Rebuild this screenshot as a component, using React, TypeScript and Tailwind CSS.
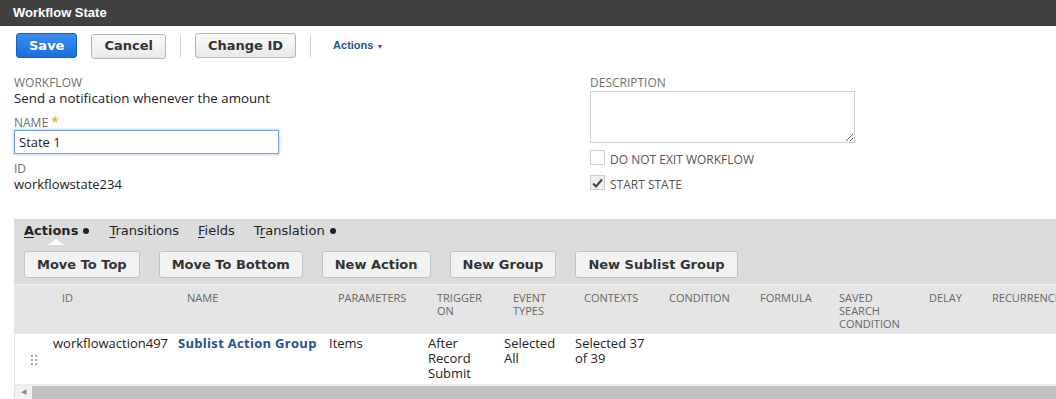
import { useState } from 'react';

const cols = [
  { key: 'id', label: 'ID', w: 'w-[125px]' },
  { key: 'name', label: 'NAME', w: 'w-[151px]' },
  { key: 'params', label: 'PARAMETERS', w: 'w-[99px]' },
  { key: 'trigger', label: 'TRIGGER ON', w: 'w-[76px]' },
  { key: 'event', label: 'EVENT TYPES', w: 'w-[71px]' },
  { key: 'contexts', label: 'CONTEXTS', w: 'w-[85px]' },
  { key: 'condition', label: 'CONDITION', w: 'w-[91px]' },
  { key: 'formula', label: 'FORMULA', w: 'w-[79px]' },
  { key: 'saved', label: 'SAVED SEARCH CONDITION', w: 'w-[90px]' },
  { key: 'delay', label: 'DELAY', w: 'w-[63px]' },
  { key: 'recur', label: 'RECURRENCE', w: 'w-[100px]' },
];

function Btn({ children, primary }: { children: React.ReactNode; primary?: boolean }) {
  if (primary) {
    return (
      <button className="h-[25px] px-[12px] rounded-[3px] border border-[#1660c4] bg-gradient-to-b from-[#3a8cf0] to-[#1b70de] text-white text-[13px] font-bold font-['DejaVu_Sans',sans-serif]">
        {children}
      </button>
    );
  }
  return (
    <button className="h-[25px] px-[12px] rounded-[3px] border border-[#b5b5b5] bg-gradient-to-b from-[#fafafa] to-[#e9e9e9] text-[#333] text-[13px] font-bold font-['DejaVu_Sans',sans-serif]">
      {children}
    </button>
  );
}

function SubBtn({ children }: { children: React.ReactNode }) {
  return (
    <button className="h-[27px] px-[12px] rounded-[3px] border border-[#c2c2c2] bg-[#f2f2f2] text-[#333] text-[13px] font-bold font-['DejaVu_Sans',sans-serif]">
      {children}
    </button>
  );
}

const Dot = () => <span className="inline-block w-[6px] h-[6px] rounded-full bg-[#222] ml-[5px] align-middle -mt-[2px]" />;

export default function App() {
  const [name, setName] = useState('State 1');

  return (
    <div className="w-[1056px] h-[399px] overflow-hidden bg-white font-['Open_Sans',sans-serif] text-[#333]">
      <div className="h-[26px] bg-[#404040] flex items-center px-[13px] text-white text-[13px] font-bold font-['Liberation_Sans',sans-serif]">
        Workflow State
      </div>

      <div className="flex items-center pl-[16px] pt-[7px] h-[32px]">
        <Btn primary>Save</Btn>
        <div className="ml-[14px]"><Btn>Cancel</Btn></div>
        <div className="w-px h-[22px] bg-[#d0d0d0] mx-[14px]" />
        <Btn>Change ID</Btn>
        <div className="w-px h-[22px] bg-[#d0d0d0] mx-[14px]" />
        <span className="ml-[8px] text-[11px] font-bold text-[#24528d] font-['Liberation_Sans',sans-serif]">
          Actions <span className="text-[7px] text-[#555]">▼</span>
        </span>
      </div>

      <div className="flex pt-[17px]">
        <div className="w-[590px] shrink-0 pl-[14px] text-[12px] leading-[15px]">
          <div className="text-[#707070] uppercase">Workflow</div>
          <div className="text-[13.3px] leading-[16px] text-[#222]">Send a notification whenever the amount</div>
          <div className="mt-[9px] h-[15px] text-[#707070] uppercase">
            Name <span className="text-[#e79b1b] text-[14px] leading-none">*</span>
          </div>
          <input
            value={name}
            onChange={(e) => setName(e.target.value)}
            className="block w-[265px] h-[24px] border border-[#6fa3e0] shadow-[0_0_3px_#8cb8ec] px-[4px] text-[13px] text-[#222] outline-none"
          />
          <div className="mt-[7px] text-[#707070] uppercase">ID</div>
          <div className="text-[13px] leading-[16px] text-[#222]">workflowstate234</div>
        </div>
        <div className="text-[12px] leading-[15px]">
          <div className="text-[#707070] uppercase">Description</div>
          <textarea className="block mt-[1px] w-[265px] h-[52px] border border-[#cfcfcf] resize-y" />
          <label className="flex items-center mt-[7px] h-[15px]">
            <span className="w-[15px] h-[15px] border border-[#ccc] bg-white" />
            <span className="ml-[5px] mt-[4px] text-[#555] uppercase">Do not exit workflow</span>
          </label>
          <label className="flex items-center mt-[10px] h-[15px]">
            <span className="w-[15px] h-[15px] border border-[#ccc] bg-[#eee] flex items-center justify-center">
              <svg width="11" height="10" viewBox="0 0 11 10">
                <path d="M1 5.5 L4 8.5 L10 1.5" fill="none" stroke="#444" strokeWidth="2" />
              </svg>
            </span>
            <span className="ml-[5px] mt-[4px] text-[#555] uppercase">Start state</span>
          </label>
        </div>
      </div>

      <div className="ml-[14px] mt-[27px] bg-[#dcdcdc] w-[1060px] h-[200px]">
        <div className="flex items-center h-[24px] pl-[10px] text-[13px] text-[#222] font-['DejaVu_Sans',sans-serif]">
          <div className="relative font-bold">
            <span className="underline underline-offset-2">A</span>ctions<Dot />
            <div className="absolute left-[24px] top-[18px] w-0 h-0 border-l-[8px] border-r-[8px] border-b-[6px] border-l-transparent border-r-transparent border-b-white" />
          </div>
          <div className="ml-[20px]"><span className="underline underline-offset-2">T</span>ransitions</div>
          <div className="ml-[19px]"><span className="underline underline-offset-2">F</span>ields</div>
          <div className="ml-[19px]">T<span className="underline underline-offset-2">r</span>anslation<Dot /></div>
        </div>
        <div className="flex items-center gap-[19px] pl-[10px] pt-[8px] h-[35px]">
          <SubBtn>Move To Top</SubBtn>
          <SubBtn>Move To Bottom</SubBtn>
          <SubBtn>New Action</SubBtn>
          <SubBtn>New Group</SubBtn>
          <SubBtn>New Sublist Group</SubBtn>
        </div>
        <div className="mt-[6px] border-t border-[#efefef] border-l border-l-[#e2e2e2] bg-white">
          <div className="flex h-[49px] bg-[#e5e5e5] text-[11px] leading-[13px] text-[#666] uppercase">
            <div className="w-[38px] shrink-0" />
            {cols.map((c) => (
              <div key={c.key} className={`${c.w} shrink-0 pl-[9px] pr-[4px] pt-[6px]`}>{c.label}</div>
            ))}
          </div>
          <div className="flex h-[50px] text-[13px] leading-[15px] text-[#222] pt-[2px]">
            <div className="w-[38px] shrink-0 flex items-center justify-center">
              <div className="grid grid-cols-2 gap-[2px]">
                {Array.from({ length: 6 }).map((_, i) => (
                  <span key={i} className="w-[2px] h-[2px] bg-[#aaa]" />
                ))}
              </div>
            </div>
            <div className="w-[125px] shrink-0">workflowaction497</div>
            <div className="w-[151px] shrink-0 font-bold text-[#24528d] tracking-[0.3px]">Sublist Action Group</div>
            <div className="w-[99px] shrink-0">Items</div>
            <div className="w-[76px] shrink-0 pr-[8px]">After Record Submit</div>
            <div className="w-[71px] shrink-0 pr-[4px]">Selected All</div>
            <div className="w-[85px] shrink-0 pr-[2px]">Selected 37 of 39</div>
          </div>
          <div className="h-[2px] bg-[#ececec]" />
          <div className="flex items-center h-[13px] bg-[#f1f1f1]">
            <span className="w-[17px] text-center text-[7px] text-[#888]">◀</span>
            <div className="flex-1 h-[13px] bg-[#c1c1c1]" />
          </div>
        </div>
      </div>
    </div>
  );
}
